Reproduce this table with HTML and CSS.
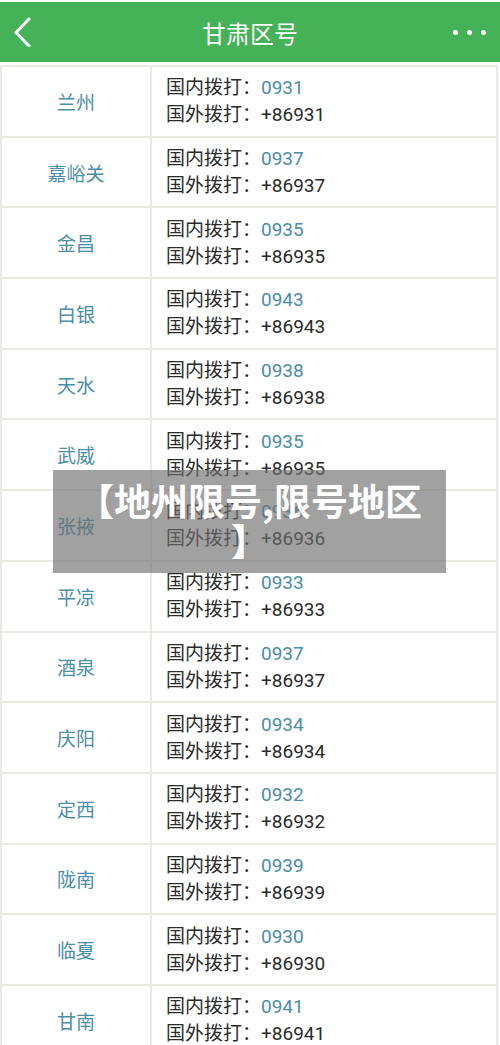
FILE: index.html
```html
<!DOCTYPE html>
<html lang="zh-CN">
<head>
  <meta charset="UTF-8" />
  <meta name="viewport" content="width=device-width, initial-scale=1" />
  <title>甘肃区号</title>
  <link rel="stylesheet" href="styles.css">
</head>
<body>
  <div class="top-bar">
    <svg class="back" width="20" height="30" viewBox="0 0 20 30">
      <path d="M17 2 L4 15.5 L17 29" fill="none" stroke="#fff" stroke-width="3" stroke-linecap="round" stroke-linejoin="round"/>
    </svg>
    <div class="title">甘肃区号</div>
    <div class="more"><span></span><span></span><span></span></div>
  </div>

  <table class="codes">
    <tr><td class="city">兰州</td><td class="dial"><div>国内拨打：<span class="code">0931</span></div><div>国外拨打：+86931</div></td></tr>
    <tr><td class="city">嘉峪关</td><td class="dial"><div>国内拨打：<span class="code">0937</span></div><div>国外拨打：+86937</div></td></tr>
    <tr><td class="city">金昌</td><td class="dial"><div>国内拨打：<span class="code">0935</span></div><div>国外拨打：+86935</div></td></tr>
    <tr><td class="city">白银</td><td class="dial"><div>国内拨打：<span class="code">0943</span></div><div>国外拨打：+86943</div></td></tr>
    <tr><td class="city">天水</td><td class="dial"><div>国内拨打：<span class="code">0938</span></div><div>国外拨打：+86938</div></td></tr>
    <tr><td class="city">武威</td><td class="dial"><div>国内拨打：<span class="code">0935</span></div><div>国外拨打：+86935</div></td></tr>
    <tr><td class="city">张掖</td><td class="dial"><div>国内拨打：<span class="code">0936</span></div><div>国外拨打：+86936</div></td></tr>
    <tr><td class="city">平凉</td><td class="dial"><div>国内拨打：<span class="code">0933</span></div><div>国外拨打：+86933</div></td></tr>
    <tr><td class="city">酒泉</td><td class="dial"><div>国内拨打：<span class="code">0937</span></div><div>国外拨打：+86937</div></td></tr>
    <tr><td class="city">庆阳</td><td class="dial"><div>国内拨打：<span class="code">0934</span></div><div>国外拨打：+86934</div></td></tr>
    <tr><td class="city">定西</td><td class="dial"><div>国内拨打：<span class="code">0932</span></div><div>国外拨打：+86932</div></td></tr>
    <tr><td class="city">陇南</td><td class="dial"><div>国内拨打：<span class="code">0939</span></div><div>国外拨打：+86939</div></td></tr>
    <tr><td class="city">临夏</td><td class="dial"><div>国内拨打：<span class="code">0930</span></div><div>国外拨打：+86930</div></td></tr>
    <tr><td class="city">甘南</td><td class="dial"><div>国内拨打：<span class="code">0941</span></div><div>国外拨打：+86941</div></td></tr>
  </table>

  <div class="banner">【地州限号,限号地区】</div>
</body>
</html>
```

FILE: styles.css
```css
body {
  margin: 0;
  background: #fff;
  font-family: Roboto, "Noto Sans CJK SC", sans-serif;
  overflow: hidden;
}
.top-bar {
  height: 60px;
  margin-top: 2px;
  background: #46b257;
  display: flex;
  align-items: center;
  justify-content: space-between;
  padding: 0 12px 0 12px;
  position: relative;
}
.back {
  display: block;
}
.title {
  position: absolute;
  left: 0;
  right: 0;
  text-align: center;
  color: #fff;
  font-size: 24px;
  font-family: "Noto Sans CJK SC", sans-serif;
}
.more {
  display: flex;
  gap: 9px;
  margin-right: 2px;
}
.more span {
  width: 5px;
  height: 5px;
  border-radius: 50%;
  background: #fff;
}
.codes {
  width: 498px;
  margin: 3px 0 0 0;
  border-collapse: collapse;
  border: 2px solid #ebe9e3;
}
.codes td {
  border: 2px solid #ebe9e3;
  height: 68.7px;
  padding: 0;
}
.city {
  width: 148px;
  text-align: center;
  color: #4b8ea8;
  font-size: 19px;
  font-family: "Noto Sans CJK SC", sans-serif;
}
.dial {
  padding-left: 14px !important;
  color: #2b2b2b;
  font-size: 19px;
  line-height: 27px;
}
.code {
  color: #4b8ea8;
}
.banner {
  position: absolute;
  left: 53px;
  top: 470px;
  width: 393px;
  height: 103px;
  background: rgba(110, 110, 110, 0.65);
  color: #fff;
  font-weight: bold;
  font-size: 37px;
  line-height: 40px;
  padding: 10px 20px 0 20px;
  box-sizing: border-box;
  text-align: center;
  line-break: anywhere;
  font-family: "Noto Sans CJK SC", sans-serif;
}
```
